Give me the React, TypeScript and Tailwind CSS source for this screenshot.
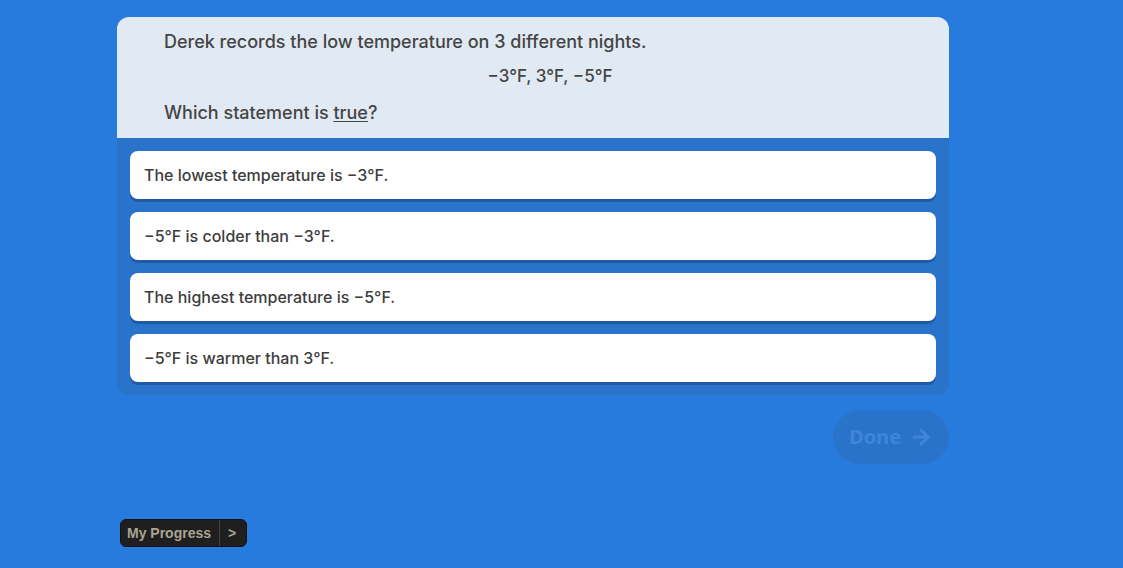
import { ArrowRight } from "lucide-react";

const options = [
  "The lowest temperature is −3°F.",
  "−5°F is colder than −3°F.",
  "The highest temperature is −5°F.",
  "−5°F is warmer than 3°F.",
];

export default function App() {
  return (
    <div
      className="w-full h-[568px] bg-[#277bdc] overflow-hidden flex flex-col"
      style={{ fontFamily: "Inter, 'Noto Sans', sans-serif" }}
    >
      <div className="ml-[117px] mt-[17px] w-[832px]">
        {/* Question card */}
        <div className="rounded-xl bg-[#2a73cb] overflow-hidden">
          <div className="bg-[#e1e9f3] pl-[47px] pr-[13px] pt-[12px] pb-[13px] text-[#454545] text-[18px] leading-[25px] font-medium">
            <p>Derek records the low temperature on 3 different nights.</p>
            <p className="text-center mt-[10px] text-[17px]">−3°F, 3°F, −5°F</p>
            <p className="mt-[11px]">
              Which statement is <span className="underline underline-offset-2">true</span>?
            </p>
          </div>
          <div className="px-[13px] pt-[13px] pb-[13px] flex flex-col gap-[13px]">
            {options.map((o) => (
              <button
                key={o}
                className="h-[48px] w-full bg-white rounded-lg text-left px-[14px] text-[16px] font-medium text-[#3d3d3d] shadow-[0_3px_0_rgba(20,60,120,0.45)]"
              >
                {o}
              </button>
            ))}
          </div>
        </div>

        {/* Done */}
        <div className="flex justify-end mt-[15px]">
          <button
            className="h-[54px] w-[116px] rounded-full bg-[#2a73cb] text-[#3f86d8] text-[20px] font-bold flex items-center justify-center gap-2"
            style={{ fontFamily: "'Open Sans', sans-serif" }}
          >
            Done
            <ArrowRight className="w-6 h-6" strokeWidth={3} />
          </button>
        </div>
      </div>

      {/* My Progress */}
      <div className="ml-[120px] mt-[55px] flex">
        <div
          className="h-[28px] flex items-center rounded-md bg-[#1f1f1f] border border-[#111] text-[#aaa493] text-[14px] font-bold"
          style={{ fontFamily: "'Liberation Sans', Arial, sans-serif" }}
        >
          <span className="pl-[6px] pr-[8px]">My Progress</span>
          <span className="h-full border-l border-[#444] pl-[8px] pr-[10px] flex items-center">&gt;</span>
        </div>
      </div>
    </div>
  );
}
